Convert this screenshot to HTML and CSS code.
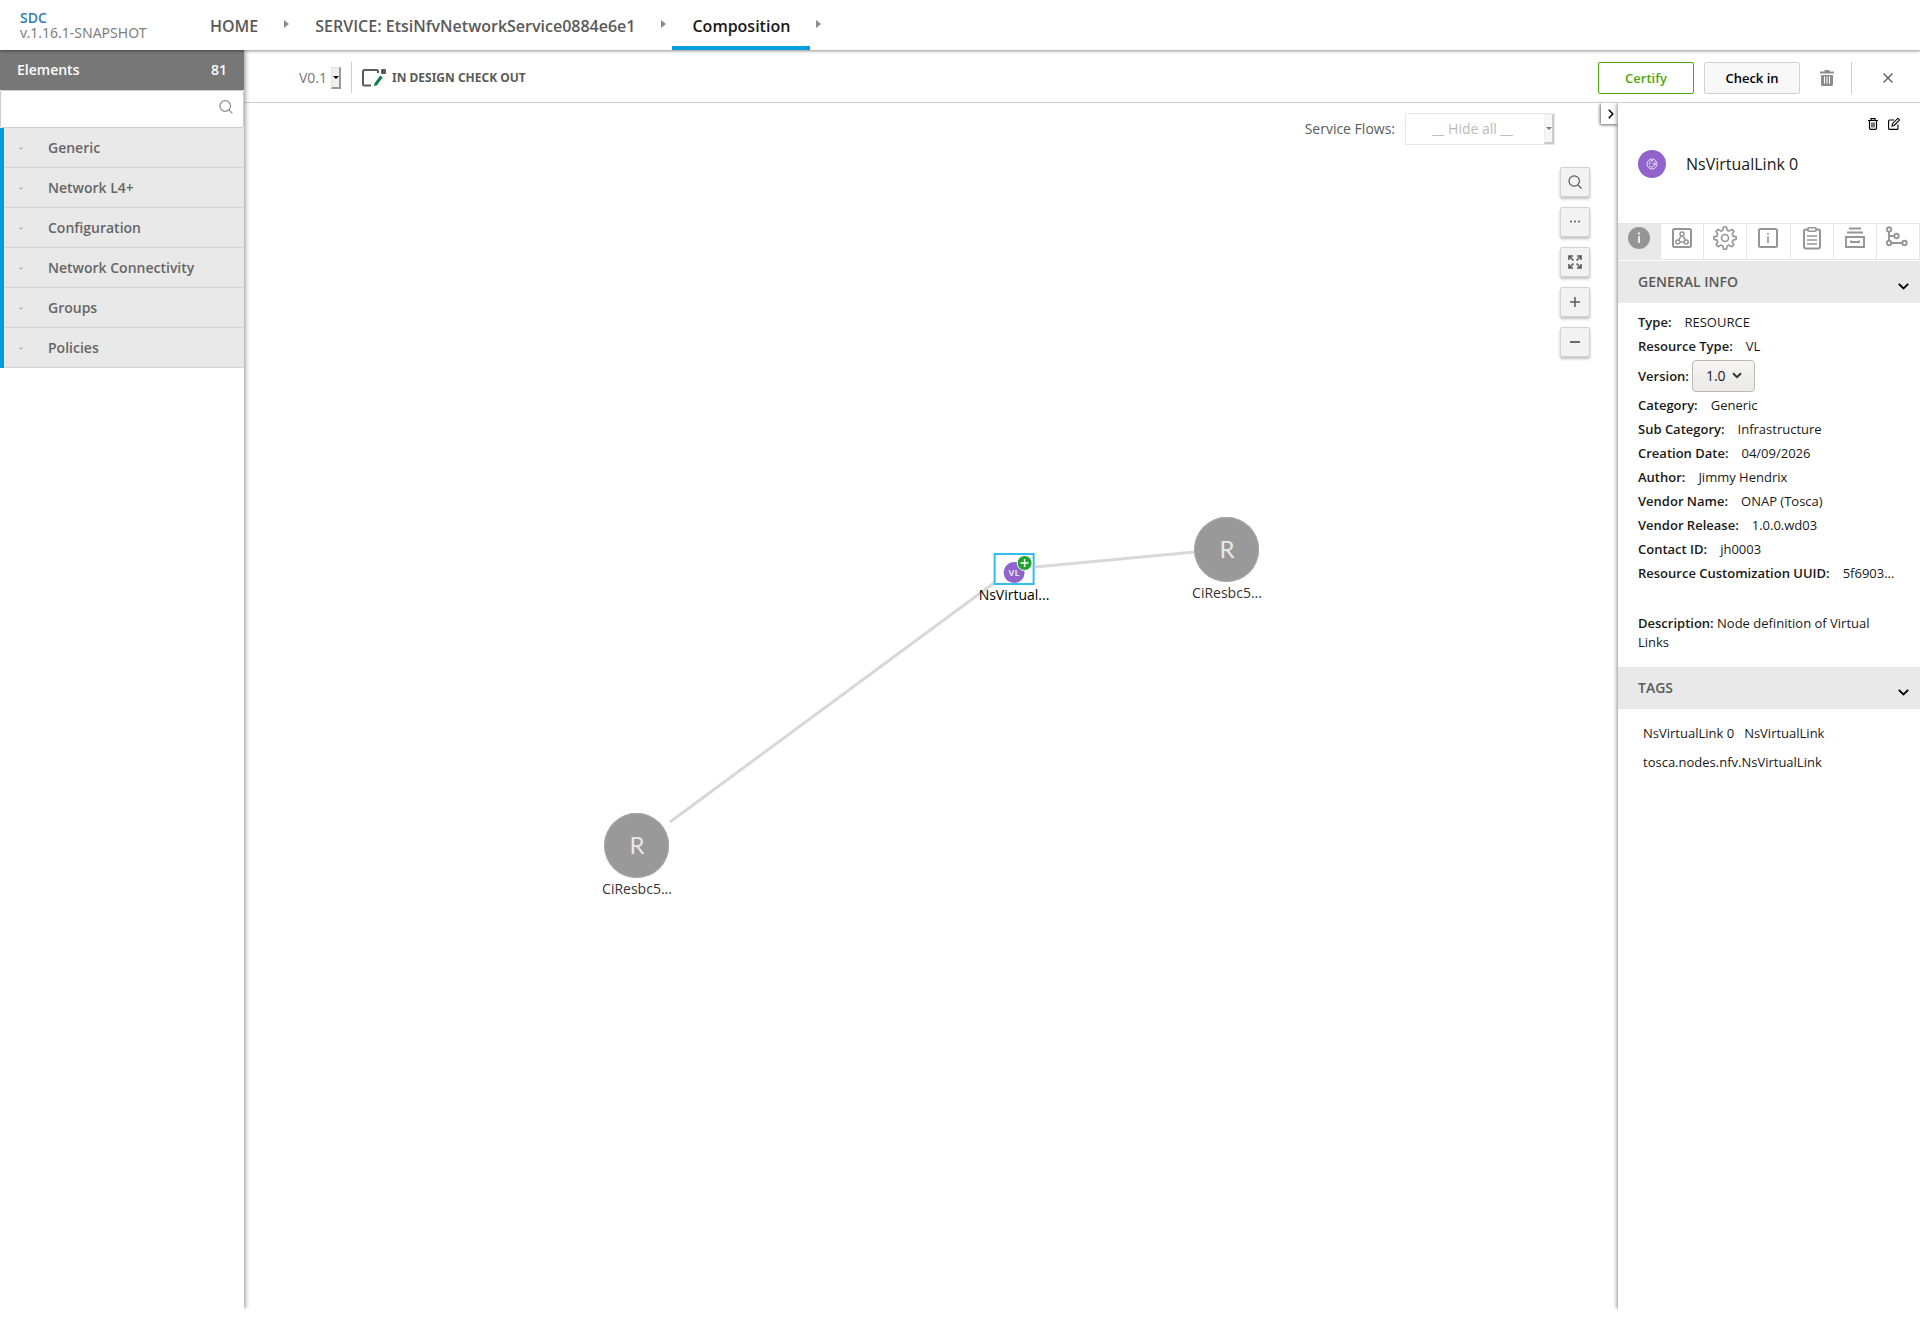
FILE: index.html
```html
<!DOCTYPE html>
<html lang="en">
<head>
<meta charset="utf-8">
<title>SDC - Composition</title>
<link rel="stylesheet" href="styles.css">
</head>
<body>
<header class="top">
  <div class="brand"><a href="#">SDC</a><span>v.1.16.1-SNAPSHOT</span></div>
  <nav class="crumbs">
    <a href="#">HOME</a><i></i>
    <a href="#">SERVICE: EtsiNfvNetworkService0884e6e1</a><i></i>
    <a href="#" class="active">Composition</a><i></i>
  </nav>
</header>
<div class="layout">
  <aside class="palette">
    <div class="palette-title"><span>Elements</span><span>81</span></div>
    <div class="palette-search">
      <input type="search" aria-label="Search elements">
      <svg width="14" height="14" viewBox="0 0 14 14" fill="none" stroke="#8f8f8f" stroke-width="1.2"><circle cx="6.2" cy="6" r="5.3"/><path d="M10 10l3.4 3.4"/></svg>
    </div>
    <ul class="groups">
      <li><button><svg class="tick" viewBox="0 0 4 3"><path d="M.2.7L2 2.2 3.8.7"/></svg>Generic</button></li>
      <li><button><svg class="tick" viewBox="0 0 4 3"><path d="M.2.7L2 2.2 3.8.7"/></svg>Network L4+</button></li>
      <li><button><svg class="tick" viewBox="0 0 4 3"><path d="M.2.7L2 2.2 3.8.7"/></svg>Configuration</button></li>
      <li><button><svg class="tick" viewBox="0 0 4 3"><path d="M.2.7L2 2.2 3.8.7"/></svg>Network Connectivity</button></li>
      <li><button><svg class="tick" viewBox="0 0 4 3"><path d="M.2.7L2 2.2 3.8.7"/></svg>Groups</button></li>
      <li><button><svg class="tick" viewBox="0 0 4 3"><path d="M.2.7L2 2.2 3.8.7"/></svg>Policies</button></li>
    </ul>
  </aside>
  <div class="workspace">
    <div class="toolbar">
      <div class="picker version">
        <select aria-label="Version"><option>V0.1</option></select><span class="drop"></span>
      </div>
      <div class="status">
        <svg width="25" height="18" viewBox="0 0 25 18" fill="none"><path d="M9 16.5H2.500Q1 16.500 1 15V2.500Q1 1 2.500 1H14.500Q16 1 16 2.500V4" stroke="#5a5a5a" stroke-width="2"/><path d="M13.500 15.500L19.500 7.500" stroke="#0b8043" stroke-width="3"/><path d="M12 17.500l.6-3 2.200 1.600z" fill="#0b8043"/><rect x="19" y="0" width="5" height="5" rx="1" fill="#5a5a5a"/></svg>
        <span>IN DESIGN CHECK OUT</span>
      </div>
      <div class="actions">
        <button class="btn certify">Certify</button>
        <button class="btn">Check in</button>
        <button class="icon trash" aria-label="Delete"><svg width="14" height="16" viewBox="0 0 14 16"><path d="M0 1.500h4.500V0h5v1.500H14v2H0zM1 5h12v9.500q0 1.500-1.500 1.500h-9Q1 16 1 14.500z" fill="#8c8c8c"/><path d="M4.500 6.500v7M7 6.500v7M9.500 6.500v7" stroke="#fff" stroke-width="1"/></svg></button>
        <button class="icon close" aria-label="Close"><svg width="10" height="10" viewBox="0 0 10 10"><path d="M.5.5l9 9m0-9l-9 9" stroke="#5a5a5a" stroke-width="1.400"/></svg></button>
      </div>
    </div>
    <div class="stage">
      <main class="canvas">
        <svg class="edges" width="1374" height="900"><path d="M791 464L951 449M426 719L754 477" stroke="#d8d8d8" stroke-width="3" fill="none"/></svg>
        <div class="node" style="left:983px;top:447px"><span class="disc">R</span><span>CiResbc5...</span></div>
        <div class="node" style="left:393px;top:743px"><span class="disc">R</span><span>CiResbc5...</span></div>
        <div class="node link" style="left:770px;top:466px">
          <span class="frame"><span class="vl">VL</span>
          <svg class="plus" width="16" height="16" viewBox="0 0 16 16"><circle cx="8" cy="8" r="7.500" fill="#20a52c" stroke="#fff"/><path d="M8 4v8M4 8h8" stroke="#fff" stroke-width="1.500"/></svg></span>
          <span>NsVirtual...</span>
        </div>
        <div class="flows">
          <label for="flows">Service Flows:</label>
          <div class="picker flow"><select id="flows"><option>__ Hide all __</option></select><span class="drop"></span></div>
        </div>
        <div class="tools">
          <button aria-label="Search"><svg width="14" height="14" viewBox="0 0 14 14"><circle cx="6.200" cy="6" r="5.200"/><path d="M10 10l3.500 3.500"/></svg></button>
          <button aria-label="More"><svg width="14" height="14" viewBox="0 0 14 14"><g fill="#5a5a5a" stroke="none"><circle cx="3" cy="6.500" r="1"/><circle cx="7" cy="6.500" r="1"/><circle cx="11" cy="6.500" r="1"/></g></svg></button>
          <button aria-label="Fit"><svg width="14" height="14" viewBox="0 0 14 14"><path d="M5 1H1v4M9 1h4v4M5 13H1V9M9 13h4V9M1 1l4.500 4.500M13 1L8.500 5.500M1 13l4.500-4.500M13 13L8.500 8.500" stroke-width="1.600"/></svg></button>
          <button aria-label="Zoom in"><svg width="14" height="14" viewBox="0 0 14 14"><path d="M7 2v10M2 7h10" stroke-width="1.500"/></svg></button>
          <button aria-label="Zoom out"><svg width="14" height="14" viewBox="0 0 14 14"><path d="M2 7h10" stroke-width="1.800"/></svg></button>
        </div>
        <button class="toggle" aria-label="Collapse panel"><svg width="6" height="10" viewBox="0 0 6 10"><path d="M.8.800L4.800 5 .8 9.200" fill="none" stroke="#000" stroke-width="1.500"/></svg></button>
      </main>
      <aside class="details">
        <div class="summary">
          <div class="edit">
            <button class="icon" aria-label="Delete"><svg width="10" height="12" viewBox="0 0 10 12"><path d="M0 2.500h10M3 2.500V.7h4v1.800M1.500 2.500V10q0 1.300 1.200 1.300h4.600q1.200 0 1.200-1.300V2.500" fill="none" stroke="#000" stroke-width="1.200"/><path d="M3 4.500h4v5H3z" fill="#777"/></svg></button>
            <button class="icon" aria-label="Edit"><svg width="12" height="12" viewBox="0 0 12 12"><path d="M6 2H1.500Q.6 2 .6 3v7.400q0 1 .9 1H9q1 0 1-1V6.500M4 8l.5-2.300L9.500.700q.5-.4 1 .1l.6.600q.4.500 0 1L6.200 7.500z" fill="none" stroke="#000" stroke-width="1.100"/></svg></button>
          </div>
          <div class="identity">
            <svg width="28" height="28" viewBox="0 0 28 28"><circle cx="14" cy="14" r="14" fill="#9063cd"/><g fill="none" stroke="#fff" stroke-width=".8"><circle cx="14" cy="14" r="5"/><path d="M11 12.500q1.500-2.500 4-1.800M16.800 11.500q1 2.500-.3 4.500M11 15.500q2 2.500 4.500 1M10.500 14l2-1M15 14.500l2.500-.5M14 12.500l1 1.500"/></g></svg>
            <span>NsVirtualLink 0</span>
          </div>
        </div>
        <div class="tabs">
          <button class="on" aria-label="General"><svg viewBox="0 0 24 24"><circle cx="12" cy="12" r="11" fill="#959595" stroke="none"/><path d="M12 10v7" stroke="#e9e9e9"/><circle cx="12" cy="7.500" r="1.200" fill="#e9e9e9" stroke="none"/></svg></button>
          <button aria-label="Structure"><svg viewBox="0 0 24 24"><rect x="3" y="3" width="18" height="18" rx="1.500"/><g stroke-width="1.500"><circle cx="12" cy="8" r="2"/><circle cx="7.800" cy="16" r="2"/><circle cx="16.200" cy="16" r="2"/><path d="M11 10l-2.500 4.300M13 10l2.500 4.300M9.800 16h4.400"/></g></svg></button>
          <button aria-label="Properties"><svg viewBox="0 0 24 24"><circle cx="12" cy="12" r="3.500" stroke-width="1.600"/><path stroke-width="1.600" stroke-linejoin="round" d="M10.600 1h2.800l.8 3.300 1.800.8 2.900-1.700 2 2-1.700 2.900.8 1.800 3.200.8v2.400l-3.200.8-.8 1.800 1.700 2.900-2 2-2.900-1.700-1.800.8-.8 3.300h-2.800l-.8-3.300-1.800-.8-2.900 1.700-2-2 1.700-2.900-.8-1.800-3.200-.8v-2.400l3.200-.8.800-1.800-1.700-2.900 2-2L8 5.100l1.800-.8z"/></svg></button>
          <button aria-label="Information"><svg viewBox="0 0 24 24"><rect x="3" y="3" width="18" height="18" rx="1.500"/><path d="M12 10.500V17M12 7v1.800" stroke-width="1.600"/></svg></button>
          <button aria-label="Requirements"><svg viewBox="0 0 24 24"><rect x="4" y="3.500" width="16" height="19" rx="2"/><rect x="8" y="1.800" width="8" height="3.500" rx="1" fill="#fff" stroke-width="1.600"/><path d="M7 10h10M7 14h10M7 18h10" stroke-width="1.600"/></svg></button>
          <button aria-label="Artifacts"><svg viewBox="0 0 24 24"><path d="M6 2.500h12M4 6.500h16M3 11h18v10H3zM8 14.500v1.500h8v-1.500" stroke-width="1.900"/></svg></button>
          <button aria-label="Operations"><svg viewBox="0 0 24 24"><g stroke-width="1.900"><circle cx="3" cy="3.500" r="2.200"/><circle cx="3" cy="17" r="2.200"/><circle cx="10.500" cy="10" r="2.200"/><circle cx="18.500" cy="17" r="2.200"/><path d="M3 5.700v9.100M3 10h5.300M5.200 17h11"/></g></svg></button>
        </div>
        <button class="section"><span>GENERAL INFO</span><svg width="11" height="7" viewBox="0 0 11 7"><path d="M.8.800L5.500 5.500 10.200.8"/></svg></button>
        <dl class="facts">
          <div><dt>Type:</dt><dd>RESOURCE</dd></div>
          <div><dt>Resource Type:</dt><dd>VL</dd></div>
          <div class="ver"><dt><label for="ver">Version:</label></dt><dd class="picker"><select id="ver"><option>1.0</option></select><svg width="10" height="7" viewBox="0 0 10 7"><path d="M1 1.200l4 4 4-4" fill="none" stroke="#2e3436" stroke-width="2"/></svg></dd></div>
          <div><dt>Category:</dt><dd>Generic</dd></div>
          <div><dt>Sub Category:</dt><dd>Infrastructure</dd></div>
          <div><dt>Creation Date:</dt><dd>04/09/2026</dd></div>
          <div><dt>Author:</dt><dd>Jimmy Hendrix</dd></div>
          <div><dt>Vendor Name:</dt><dd>ONAP (Tosca)</dd></div>
          <div><dt>Vendor Release:</dt><dd>1.0.0.wd03</dd></div>
          <div><dt>Contact ID:</dt><dd>jh0003</dd></div>
          <div><dt>Resource Customization UUID:</dt><dd>5f6903...</dd></div>
        </dl>
        <p class="description"><b>Description:</b> Node definition of Virtual Links</p>
        <button class="section"><span>TAGS</span><svg width="11" height="7" viewBox="0 0 11 7"><path d="M.8.800L5.500 5.500 10.200.8"/></svg></button>
        <ul class="tags"><li>NsVirtualLink 0</li><li>NsVirtualLink</li><li>tosca.nodes.nfv.NsVirtualLink</li></ul>
      </aside>
    </div>
  </div>
</div>
</body>
</html>
```
FILE: styles.css
```css
* { box-sizing: border-box; }
body {
  margin: 0;
  min-height: 100vh;
  display: flex;
  flex-direction: column;
  padding-bottom: 10px;
  background: #fff;
  color: #191919;
  font: 13px/18px "Open Sans", sans-serif;
}
a { color: inherit; text-decoration: none; }
button, select, input { font: inherit; color: inherit; }
button { border: 0; padding: 0; background: none; cursor: pointer; }
svg { display: block; flex: none; }
ul, dl, dd, p { margin: 0; padding: 0; }
ul { list-style: none; }

.top {
  height: 50px;
  flex: none;
  display: flex;
  position: relative;
  z-index: 3;
  background: #fff;
  box-shadow: 0 1px 3px rgba(0, 0, 0, .45);
}
.brand {
  width: 190px;
  padding: 10px 0 0 20px;
  font-size: 14px;
  line-height: 15px;
  font-weight: 600;
  display: flex;
  flex-direction: column;
}
.brand span { font-family: "Noto Sans", sans-serif; font-weight: 400; color: #808080; }
.brand a { color: #337ab7; }
.crumbs { display: flex; font-size: 16px; font-weight: 600; color: #5a5a5a; }
.crumbs a { padding: 0 20px; line-height: 52px; height: 50px; }
.crumbs .active { color: #191919; box-shadow: inset 0 -4px #009fdb; }
.crumbs i {
  margin: 20px 6px 0;
  height: 8px;
  border-left: 5px solid #8c8c8c;
  border-top: 4px solid transparent;
  border-bottom: 4px solid transparent;
}

.layout { flex: 1; display: flex; }
.palette {
  width: 244px;
  flex: none;
  z-index: 2;
  background: #fff;
  box-shadow: 1px 0 5px rgba(0, 0, 0, .45);
  clip-path: inset(0 -8px 0 0);
}
.palette-title {
  height: 40px;
  padding: 0 17px;
  display: flex;
  justify-content: space-between;
  align-items: center;
  background: #777;
  color: #fff;
  font-size: 14px;
  font-weight: 600;
}
.palette-search {
  height: 38px;
  display: flex;
  align-items: center;
  padding-right: 10px;
  padding-bottom: 4px;
  border: 1px solid #cdcdcd;
  border-radius: 2px;
}
.palette-search input { flex: 1; min-width: 0; border: 0; outline: 0; background: none; }
.groups button {
  width: 100%;
  height: 40px;
  display: flex;
  align-items: center;
  gap: 25px;
  padding-left: 15px;
  border-left: 4px solid #009fdb;
  background: #e9e9e9;
  box-shadow: inset 0 -1px 1px rgba(0, 0, 0, .1);
  color: #666;
  font-size: 14px;
  font-weight: 600;
}
.tick { width: 4px; height: 3px; fill: none; stroke: #999; stroke-width: 1; }

.workspace { flex: 1; min-width: 0; display: flex; flex-direction: column; }
.toolbar {
  height: 53px;
  display: flex;
  align-items: center;
  padding: 3px 27px 0 55px;
  border-bottom: 1px solid #cdcdcd;
}
.picker { display: grid; align-items: center; }
.picker > * { grid-area: 1 / 1; }
.picker select { appearance: none; border: 0; border-radius: 0; padding: 0; background: none; outline: 0; }
.drop {
  justify-self: end;
  pointer-events: none;
  width: 10px;
  height: 22px;
  display: grid;
  place-items: center;
  background: #efefef;
  border: 1px solid #e3e3e3;
  border-right: 2px solid #999;
  border-bottom: 2px solid #999;
}
.drop::before { content: ""; border: 3px solid transparent; border-top-color: #000; border-bottom: 0; }
.version { width: 42px; padding-top: 1px; font-size: 14px; color: #777; }
.status {
  display: flex;
  align-items: center;
  gap: 5px;
  height: 31px;
  margin-left: 10px;
  padding-left: 10px;
  border-left: 1px solid #cdcdcd;
  font: 700 12px/18px "Noto Sans", sans-serif;
  color: #5a5a5a;
}
.actions { margin-left: auto; display: flex; align-items: center; }
.btn {
  width: 96px;
  height: 32px;
  margin-right: 10px;
  border: 1px solid #d2d2d2;
  border-radius: 2px;
  background: #f8f8f8;
  color: #000;
  font-weight: 600;
}
.certify { border-color: #4ca90c; background: #fff; color: #4ca90c; }
.trash { margin: 0 17px 0 10px; }
.close { height: 32px; padding-left: 31px; border-left: 1px solid #cdcdcd; }

.stage { flex: 1; display: flex; }
.canvas { flex: 1; min-width: 0; position: relative; overflow: hidden; }
.edges { position: absolute; left: 0; top: 0; }
.node {
  position: absolute;
  display: flex;
  flex-direction: column;
  align-items: center;
  gap: 1px;
  transform: translate(-50%, -33px);
  font-size: 14px;
  line-height: 20px;
  color: #333;
}
.disc {
  width: 65px;
  height: 65px;
  border-radius: 50%;
  background: #999;
  box-shadow: inset 0 0 0 1px #a8a8a8;
  color: #e9e9e9;
  font: 24px/64px Lato, sans-serif;
  text-align: center;
}
.link { transform: translate(-50%, -16px); gap: 0; color: #000; }
.frame {
  position: relative;
  width: 41px;
  height: 32px;
  display: flex;
  align-items: flex-end;
  justify-content: center;
  border: 2px solid #32bdf0;
  background: #fff;
}
.vl {
  width: 21px;
  height: 21px;
  border-radius: 50%;
  background: #9063cd;
  color: #e9e0f5;
  font-size: 9px;
  line-height: 21px;
  font-weight: 700;
  text-align: center;
}
.plus { position: absolute; top: 0; right: 0; }

.flows {
  position: relative;
  display: flex;
  justify-content: flex-end;
  align-items: center;
  gap: 10px;
  padding: 10px 63px 0 0;
  font-size: 14px;
  color: #5a5a5a;
}
.flow { width: 150px; height: 32px; border: 1px solid #e6e6e6; }
.flow select { height: 30px; padding-right: 15px; color: #bbb; text-align: center; text-align-last: center; }
.flow .drop { height: 30px; opacity: .5; }
.tools {
  position: relative;
  display: flex;
  flex-direction: column;
  align-items: flex-end;
  gap: 10px;
  padding: 22px 28px 0 0;
}
.tools button {
  width: 30px;
  height: 30px;
  display: grid;
  place-items: center;
  border: 1px solid #d2d2d2;
  border-radius: 2px;
  background: #f2f2f2;
  box-shadow: 0 2px 3px rgba(0, 0, 0, .25);
}
.tools svg { fill: none; stroke: #5a5a5a; stroke-width: 1.2; }
.toggle {
  position: absolute;
  top: 0;
  right: 0;
  width: 17px;
  height: 21px;
  display: grid;
  place-items: center;
  padding-left: 3px;
  background: #fff;
  box-shadow: -1px 1px 3px rgba(0, 0, 0, .6);
}

.details {
  width: 302px;
  flex: none;
  z-index: 1;
  background: #fff;
  box-shadow: -1px 0 4px rgba(0, 0, 0, .45);
  clip-path: inset(0 0 0 -8px);
}
.summary { height: 120px; }
.edit { display: flex; justify-content: flex-end; gap: 10px; padding: 15px 20px 0 0; }
.identity { display: flex; align-items: center; gap: 20px; padding: 18px 20px 0; font-size: 16px; line-height: 32px; }
.tabs { display: grid; grid-template-columns: repeat(7, 1fr); height: 37px; margin-bottom: 1px; border: solid #e6e6e6; border-width: 1px 0; }
.tabs button { display: flex; justify-content: center; padding-top: 2px; border-right: 1px solid #e6e6e6; }
.tabs .on { background: #e9e9e9; }
.tabs svg { width: 24px; height: 24px; fill: none; stroke: #959595; stroke-width: 2; }
.section {
  width: 100%;
  height: 42px;
  display: flex;
  justify-content: space-between;
  align-items: center;
  padding: 0 11px 0 20px;
  background: #e9e9e9;
  color: #5a5a5a;
  font-size: 14px;
  font-weight: 600;
}
.section svg { margin-top: 8px; fill: none; stroke: #000; stroke-width: 1.8; }
.facts { padding: 7px 20px 0; }
.facts div { display: flex; gap: 13px; line-height: 24px; white-space: nowrap; }
.facts dt { font-weight: 600; }
.facts .ver { height: 35px; align-items: center; gap: 3px; }
.ver select {
  width: 63px;
  height: 32px;
  padding-left: 13px;
  border: 1px solid #bfb8b1;
  border-radius: 4px;
  background: linear-gradient(#f6f5f4, #ebe9e7);
  font-size: 14px;
}
.ver svg { justify-self: end; margin-right: 13px; pointer-events: none; }
.description { padding: 29px 40px 15px 20px; line-height: 19px; }
.description b { font-weight: 600; }
.tags { display: flex; flex-wrap: wrap; column-gap: 10px; padding: 10px 25px; line-height: 29px; }
```
